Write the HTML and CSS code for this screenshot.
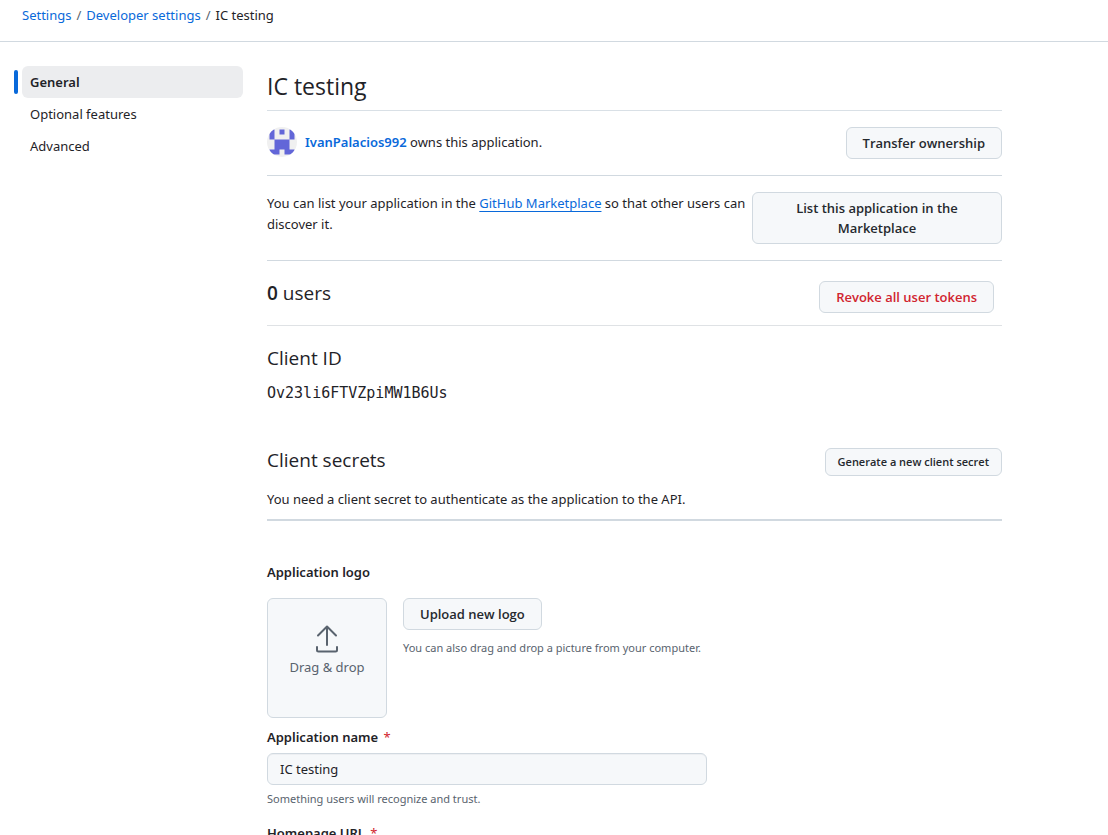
FILE: index.html
```html
<!DOCTYPE html>
<html lang="en">
<head>
<meta charset="utf-8">
<meta name="viewport" content="width=device-width, initial-scale=1">
<title>IC testing</title>
<link rel="stylesheet" href="styles.css">
</head>
<body>
<header class="topbar">
  <nav class="breadcrumb" aria-label="Breadcrumb">
    <a href="#settings">Settings</a>
    <span class="slash">/</span>
    <a href="#developer">Developer settings</a>
    <span class="slash">/</span>
    <span>IC testing</span>
  </nav>
</header>
<div class="layout">
  <nav class="sidenav" aria-label="Application settings">
    <a class="sidenav-item current" href="#general" aria-current="page">General</a>
    <a class="sidenav-item" href="#optional">Optional features</a>
    <a class="sidenav-item" href="#advanced">Advanced</a>
  </nav>
  <main class="content">
    <h1 class="title">IC testing</h1>

    <section class="row owner-row">
      <div class="owner">
        <svg class="avatar" viewBox="0 0 60 60" aria-hidden="true">
          <defs><clipPath id="round"><circle cx="30" cy="30" r="30"/></clipPath></defs>
          <g clip-path="url(#round)">
            <rect width="60" height="60" fill="#f0f0f0"/>
            <path fill="#6266d8" d="M5 5h10v20H5zM25 5h10v10H25zM45 5h10v20H45zM15 25h30v20h10v10H35V45H25v10H5V45h10z"/>
          </g>
        </svg>
        <p><a class="owner-name" href="#owner">IvanPalacios992</a> owns this application.</p>
      </div>
      <button class="btn" type="button">Transfer ownership</button>
    </section>

    <section class="row market-row">
      <p class="market-text">You can list your application in the <a class="underlined" href="#marketplace">GitHub Marketplace</a> so that other users can discover it.</p>
      <button class="btn market-btn" type="button">List this application in the Marketplace</button>
    </section>

    <section class="row users-row">
      <h2 class="heading"><strong>0</strong> users</h2>
      <button class="btn danger" type="button">Revoke all user tokens</button>
    </section>

    <section class="client-id">
      <h2 class="heading">Client ID</h2>
      <code class="code">Ov23li6FTVZpiMW1B6Us</code>
    </section>

    <section class="secrets">
      <div class="secrets-head">
        <h2 class="heading">Client secrets</h2>
        <button class="btn small" type="button">Generate a new client secret</button>
      </div>
      <p>You need a client secret to authenticate as the application to the API.</p>
    </section>

    <form class="form">
      <h3 class="label">Application logo</h3>
      <div class="logo-field">
        <div class="dropzone">
          <svg class="upload-icon" viewBox="0 0 24 28" fill="none" stroke="currentColor" stroke-width="2" stroke-linecap="round" stroke-linejoin="round" aria-hidden="true">
            <path d="M12 20V2M3 10.500l9-9 9 9M2 22v3q0 1.500 1.500 1.500h17q1.500 0 1.500-1.500v-3"/>
          </svg>
          <span>Drag &amp; drop</span>
        </div>
        <div class="logo-side">
          <button class="btn" type="button">Upload new logo</button>
          <p class="note">You can also drag and drop a picture from your computer.</p>
        </div>
      </div>
      <label class="label" for="app-name">Application name <span class="required">*</span></label>
      <input class="input" id="app-name" type="text" value="IC testing" required>
      <p class="note name-note">Something users will recognize and trust.</p>
      <label class="label" for="home-url">Homepage URL <span class="required">*</span></label>
      <input class="input" id="home-url" type="text" required>
    </form>
  </main>
</div>
</body>
</html>
```
FILE: styles.css
```css
* { box-sizing: border-box; }
html { height: 100%; overflow: hidden; }
body {
  height: 100%;
  margin: 0;
  overflow: hidden;
  background: #fff;
  color: #1f2328;
  font: 13px/21px "Noto Sans", "Open Sans", sans-serif;
}
h1, h2, h3, p { margin: 0; }
a { color: #0969da; text-decoration: none; }

.topbar {
  padding: 5px 22px 15px;
  border-bottom: 1px solid #d1d9e0;
}
.breadcrumb { display: flex; gap: 5px; }
.slash { color: #59636e; }

.layout {
  display: grid;
  grid-template-columns: 221px minmax(0, 1fr);
  gap: 24px;
  max-width: 980px;
  margin: 24px 22px 0;
}
.sidenav-item {
  display: block;
  position: relative;
  padding: 6px 8px;
  border-radius: 6px;
  line-height: 20px;
  color: #1f2328;
}
.current { background: #ecedef; font-weight: 600; }
.current::before {
  content: "";
  position: absolute;
  top: 4px;
  left: -8px;
  width: 4px;
  height: 24px;
  border-radius: 6px;
  background: #0969da;
}

.title, .heading {
  font-family: "Open Sans", "Noto Sans", sans-serif;
  font-weight: 400;
}
.title {
  padding: 2px 0 6px;
  border-bottom: 1px solid #d9e0e6;
  font-size: 23px;
  line-height: 36px;
}
.heading { font-size: 19px; line-height: 28px; }
.heading strong { font-weight: 600; }

.row {
  display: flex;
  justify-content: space-between;
  padding: 16px 0;
  border-bottom: 1px solid #d1d9e0;
}
.owner { display: flex; gap: 8px; line-height: 30px; }
.avatar { width: 30px; height: 30px; }
.owner-name { font-weight: 600; }
.market-text { padding-top: 1px; }
.market-btn { flex: 0 0 250px; }
.underlined { text-decoration: underline; text-underline-offset: 3px; }
.users-row { padding: 20px 8px 12px 0; border-color: #dfe2e5; }
.users-row .heading { line-height: 24px; }

.btn {
  padding: 5px 16px;
  border: 1px solid #d1d9e0;
  border-radius: 6px;
  background: #f6f8fa;
  color: #25292e;
  font: 600 13px/20px "Open Sans", "Noto Sans", sans-serif;
}
.danger { color: #d1242f; }
.small { padding: 3px 12px; font-size: 11px; }

.client-id { padding-top: 18px; }
.code {
  display: block;
  margin-top: 11px;
  font: 15px/20px "DejaVu Sans Mono", monospace;
}
.secrets {
  margin-top: 45px;
  padding-bottom: 9px;
  border-bottom: 2px solid #d1d9e0;
}
.secrets-head { display: flex; justify-content: space-between; margin-bottom: 13px; }
.secrets-head .heading { line-height: 24px; }

.form { margin-top: 41px; }
.label { display: block; font-size: 13px; line-height: 21px; font-weight: 600; }
.required { margin-left: 2px; color: #d1242f; font-weight: 400; }
.logo-field { display: flex; gap: 16px; margin: 15px 0 9px; }
.dropzone {
  display: flex;
  flex-direction: column;
  align-items: center;
  gap: 4px;
  width: 120px;
  height: 120px;
  padding-top: 26px;
  border: 1px solid #d1d9e0;
  border-radius: 6px;
  background: #f6f8fa;
  color: #59636e;
}
.upload-icon { width: 24px; height: 28px; }
.note { color: #59636e; font-size: 11px; line-height: 18px; }
.logo-side .note { margin-top: 9px; }
.input {
  display: block;
  width: 100%;
  max-width: 440px;
  height: 32px;
  margin-top: 5px;
  padding: 5px 12px;
  border: 1px solid #d1d9e0;
  border-radius: 6px;
  background: #f6f8fa;
  box-shadow: inset 0 1px 0 #1f23280a;
  color: #1f2328;
  font: 13px/20px "Noto Sans", "Open Sans", sans-serif;
}
.name-note { margin: 5px 0 15px; }
```
